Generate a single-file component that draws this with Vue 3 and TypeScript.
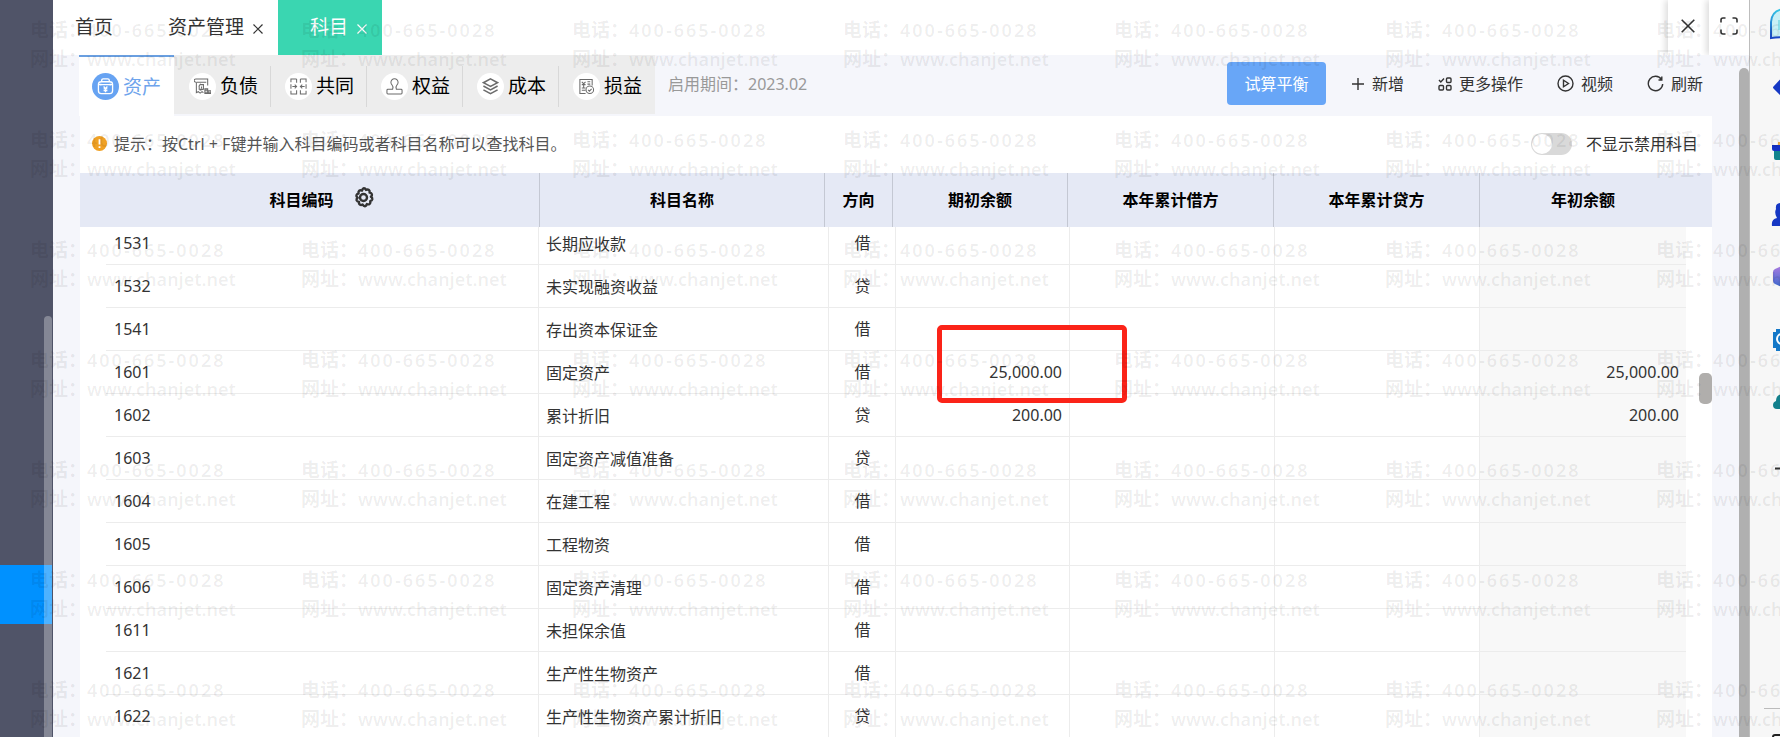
<script setup lang="ts">
import { ref } from 'vue'

interface Account {
  code: string
  name: string
  dir: '借' | '贷'
  opening?: string
  debit?: string
  credit?: string
  yearStart?: string
}

const categories = ['资产', '负债', '共同', '权益', '成本', '损益']
const activeCategory = ref(0)
const hideDisabled = ref(false)

const accounts: Account[] = [
  { code: '1531', name: '长期应收款', dir: '借' },
  { code: '1532', name: '未实现融资收益', dir: '贷' },
  { code: '1541', name: '存出资本保证金', dir: '借' },
  { code: '1601', name: '固定资产', dir: '借', opening: '25,000.00', yearStart: '25,000.00' },
  { code: '1602', name: '累计折旧', dir: '贷', opening: '200.00', yearStart: '200.00' },
  { code: '1603', name: '固定资产减值准备', dir: '贷' },
  { code: '1604', name: '在建工程', dir: '借' },
  { code: '1605', name: '工程物资', dir: '借' },
  { code: '1606', name: '固定资产清理', dir: '借' },
  { code: '1611', name: '未担保余值', dir: '借' },
  { code: '1621', name: '生产性生物资产', dir: '借' },
  { code: '1622', name: '生产性生物资产累计折旧', dir: '贷' },
]
</script>

<template>
  <div class="page">
    <aside class="sidebar">
      <div class="side-active"></div>
      <div class="side-thumb"></div>
    </aside>

    <div class="workspace">
      <header class="topbar">
        <nav class="pages">
          <button class="page-tab home">首页</button>
          <button class="page-tab assets">资产管理
            <svg class="x" viewBox="0 0 10 10"><path d="M.5.5l9 9M9.5.5l-9 9" /></svg>
          </button>
          <button class="page-tab current">科目
            <svg class="x" viewBox="0 0 10 10"><path d="M.5.5l9 9M9.5.5l-9 9" /></svg>
          </button>
        </nav>
        <button class="win-btn close" aria-label="关闭">
          <svg width="14" height="14" viewBox="0 0 14 14"><path d="M.7.7l12.6 12.6M13.3.7L.7 13.3" /></svg>
        </button>
        <button class="win-btn full" aria-label="全屏">
          <svg width="18" height="18" viewBox="0 0 18 18"><path d="M1 5.500V3q0-2 2-2h2.500M12.500 1H15q2 0 2 2v2.500M17 12.500V15q0 2-2 2h-2.500M5.500 17H3q-2 0-2-2v-2.500" /></svg>
        </button>
      </header>

      <div class="content">
        <main class="main">
          <div class="toolbar">
            <div class="categories" role="tablist">
              <button
                v-for="(c, i) in categories"
                :key="c"
                role="tab"
                :aria-selected="i === activeCategory"
                :class="['category', { active: i === activeCategory }]"
                @click="activeCategory = i"
              >
                <span class="disc">
                  <svg v-if="i === 0" viewBox="0 0 18 18">
                    <rect x="1.500" y="4" width="15" height="12.500" rx="3" />
                    <path d="M5 4V2.500Q5 1 6.500 1h5Q13 1 13 2.500V4M1.500 7h15M4 6v2M14 6v2" />
                    <path d="M7 9l2 2.200L11 9M9 11v4M7 11.500h4M7 13.300h4" />
                  </svg>
                  <svg v-else-if="i === 1" viewBox="0 0 18 18">
                    <path d="M2.500 4.500C-.5 4.500-.5 1 2 1h12.500v7M2.500 4.500V15.500l2-1 2 1.500 2-1.500 1.500 1M3 4.500h10M7 6L5 9M6 7h4v5H5.500V8.500M8 9v2M6 13l4-1" />
                    <path d="M11.500 11.500h3v5h-3zM15 13.500h3v3h-3zM12 13h2M12 15h2M15.500 15h2" />
                  </svg>
                  <svg v-else-if="i === 2" viewBox="0 0 18 18">
                    <path d="M7 1H1v3.500M1 6.500v5M1 13.500V17h6V13M7 1v4M11 1h6v3.500M17 6.500v5M17 13.500V17h-6V13M11 1v4M2.500 9H7M5 7l2 2-2 2M15.500 9H11M13 7l-2 2 2 2" />
                  </svg>
                  <svg v-else-if="i === 3" viewBox="0 0 18 18">
                    <path d="M7 12q1-3-.5-4.500a3.800 3.800 0 1 1 5 0Q10 9 11 12h5q1 0 1 1v3q0 1-1 1H2q-1 0-1-1v-3q0-1 1-1z" />
                  </svg>
                  <svg v-else-if="i === 4" class="bold" viewBox="0 0 18 18">
                    <path d="M9 1l7.500 4L9 9 1.500 5zM1.500 8.500L9 12.500l7.500-4M1.500 12.500L9 16.500l7.500-4" />
                  </svg>
                  <svg v-else viewBox="0 0 18 18">
                    <path d="M8 16.500H2V1.500h13V8M4 4l2 2 2-2M6 6v4M4 7h4M10 4h3M10 6.500h3M4 10.500h4M4 13h4" />
                    <circle cx="12.500" cy="12.500" r="4" /><path d="M10.700 12.500l1.400 1.500 2.300-2.500" />
                  </svg>
                </span>
                {{ c }}
              </button>
            </div>
            <span class="period">启用期间：2023.02</span>
            <div class="actions">
              <button class="primary">试算平衡</button>
              <button class="action">
                <svg width="14" height="14" viewBox="0 0 14 14"><path d="M7 1v12M1 7h12" /></svg>新增
              </button>
              <button class="action more">
                <svg width="14" height="14" viewBox="0 0 14 14">
                  <path d="M1 3l1.800 2L6 1.500" /><rect x="8.500" y="1" width="4.500" height="4.500" rx="1" />
                  <rect x="1" y="8.500" width="4.500" height="4.500" rx="1" /><rect x="8.500" y="8.500" width="4.500" height="4.500" rx="1" />
                </svg>更多操作
              </button>
              <button class="action video">
                <svg width="17" height="17" viewBox="0 0 17 17"><circle cx="8.500" cy="8.500" r="7.500" /><path d="M6.500 5.200v6.600l5-3.300z" /></svg>视频
              </button>
              <button class="action reload">
                <svg width="17" height="17" viewBox="0 0 17 17"><path d="M14.500 4.500A7.200 7.200 0 1 0 15.700 9M11.500 5h3.300V1.500" /></svg>刷新
              </button>
            </div>
          </div>

          <section class="panel">
            <div class="hint">
              <svg width="15" height="15" viewBox="0 0 15 15"><circle cx="7.500" cy="7.500" r="7.500" fill="#f0a125" /><path d="M7.500 3.300v5.200M7.500 10.200v1.700" stroke="#fff" stroke-width="1.800" /></svg>
              <span>提示：按Ctrl + F键并输入科目编码或者科目名称可以查找科目。</span>
              <label class="switch">
                <input v-model="hideDisabled" type="checkbox" role="switch" />
                不显示禁用科目
              </label>
            </div>

            <div class="thead">
              <table>
                <colgroup>
                  <col /><col class="h-name" /><col class="h-dir" /><col class="h-open" /><col class="h-sum" /><col class="h-sum" /><col class="year" />
                </colgroup>
                <thead>
                  <tr>
                    <th>
                      <span class="code-head">科目编码
                        <button class="gear" aria-label="列设置">
                          <svg width="24" height="24" viewBox="0 0 24 24">
                            <path d="M12 2.200q1.200 0 1.900 1.700 1.700-.9 3 .1 1 .8.700 2.600 1.900.2 2.300 1.700.4 1.400-1 2.500 1.600 1 1.400 2.400-.3 1.500-2.100 1.900.6 1.700-.5 2.700-1.200 1-2.800.3-.5 1.800-2 2.100-1.400 0-2.300-1.700-1.500 1-2.800.1-1.200-1-.7-2.600-1.900-.2-2.500-1.600-.4-1.500 1.100-2.600-1.600-1.100-1.300-2.500.4-1.500 2.200-1.800-.5-1.800.6-2.700 1.200-1 2.800-.2.600-2 2-2.400z" />
                            <circle cx="11.500" cy="11.500" r="3.500" />
                          </svg>
                        </button>
                      </span>
                    </th>
                    <th>科目名称</th><th>方向</th><th>期初余额</th><th>本年累计借方</th><th>本年累计贷方</th><th>年初余额</th>
                  </tr>
                </thead>
              </table>
            </div>

            <div class="tbody">
              <table aria-label="科目">
                <colgroup>
                  <col /><col class="b-name" /><col class="b-dir" /><col class="b-open" /><col class="b-debit" /><col class="b-credit" /><col class="year" />
                </colgroup>
                <tbody>
                  <tr v-for="a in accounts" :key="a.code">
                    <td>{{ a.code }}</td>
                    <td class="name">{{ a.name }}</td>
                    <td class="dir">{{ a.dir }}</td>
                    <td class="num">{{ a.opening }}</td>
                    <td class="num">{{ a.debit }}</td>
                    <td class="num">{{ a.credit }}</td>
                    <td class="num shade">{{ a.yearStart }}</td>
                  </tr>
                </tbody>
              </table>
              <div class="table-thumb"></div>
              <div class="highlight"></div>
            </div>
          </section>
        </main>
        <div class="scrollbar"></div>
      </div>
    </div>

    <aside class="rail">
      <button aria-label="消息">
        <svg viewBox="0 0 32 32">
          <defs><linearGradient id="chat" x2="0" y2="1"><stop stop-color="#35c8e5" /><stop offset="1" stop-color="#1745c4" /></linearGradient></defs>
          <path d="M1 30V14Q2 1 16 1t15 14-15 14Q8 29 1 30z" fill="#c9f0f6" stroke="url(#chat)" stroke-width="2" /><path d="M8 12h16v10H8z" fill="#8edfe8" />
        </svg>
      </button>
      <button aria-label="应用"><svg viewBox="0 0 32 32"><path d="M3.500 15.500q-1 1 0 2L14 28l12-12L14 4z" fill="#1638c4" /></svg></button>
      <button aria-label="礼品"><svg viewBox="0 0 32 32"><path d="M4 14h24v12H6q-2 0-2-2z" fill="#12838e" /><path d="M2 11h28v6H4q-2 0-2-2z" fill="#1432c6" /><path d="M8 8h10v3H8z" fill="#f0b34a" /></svg></button>
      <button aria-label="客服"><svg viewBox="0 0 32 32"><path d="M2 29q-1-7 5-8-3-5-1-9-1-6 5-6h9v23z" fill="#1638c4" /></svg></button>
      <button aria-label="产品">
        <svg viewBox="0 0 32 32"><defs><linearGradient id="cube" x2="0" y2="1"><stop stop-color="#ae7be0" /><stop offset="1" stop-color="#3868cc" /></linearGradient></defs><path d="M3 12q0-2 2-3l9-4 12 6v10l-12 7-9-4q-2-1-2-3z" fill="url(#cube)" /></svg>
      </button>
      <button aria-label="助手"><svg viewBox="0 0 32 32"><path d="M6 6h18v22H6v-3H3V9h3z" fill="#1478c8" /><circle cx="12" cy="16" r="5" fill="#1478c8" stroke="#fff" stroke-width="2" /></svg></button>
      <button aria-label="云"><svg viewBox="0 0 32 32"><path d="M7 23q-4 0-4-4 0-3 3-4 0-7 8-7 7 0 8 7v8z" fill="#13808c" /></svg></button>
      <button aria-label="收起"><svg viewBox="0 0 32 32"><path d="M5 19.500h20" stroke="#333" stroke-width="2" /></svg></button>
      <div class="rail-foot"><svg width="20" height="28" viewBox="0 0 20 28"><rect x="1" y="26" width="18" height="12" rx="2" fill="none" stroke="#222" stroke-width="2" /></svg></div>
    </aside>

    <div class="watermark" aria-hidden="true">
      <div v-for="n in 49" :key="n" class="mark">
        <div>电话：<span class="value phone">400-665-0028</span></div>
        <div>网址：<span class="value">www.chanjet.net</span></div>
      </div>
    </div>
  </div>
</template>

<style>
body {
  margin: 0;
}
</style>

<style scoped>
.page {
  position: relative;
  display: flex;
  height: 100vh;
  overflow: hidden;
  font: 16px/24px "Noto Sans", "Noto Sans CJK SC", sans-serif;
  color: #333;
  background: #f5f6fb;
}
.page * {
  box-sizing: border-box;
}
button {
  border: 0;
  padding: 0;
  background: none;
  font: inherit;
  color: inherit;
  cursor: pointer;
  white-space: nowrap;
}
svg {
  display: block;
  flex: none;
  fill: none;
}

.sidebar {
  position: relative;
  flex: none;
  width: 53px;
  background: #505468;
}
.side-active {
  margin-top: 565px;
  height: 59px;
  width: 52px;
  background: #0091ff;
}
.side-thumb {
  position: absolute;
  top: 316px;
  bottom: 0;
  right: 1px;
  width: 8px;
  border-radius: 4px 4px 0 0;
  background: rgba(255, 255, 255, 0.3);
}

.workspace {
  flex: 1;
  min-width: 0;
  display: flex;
  flex-direction: column;
}
.topbar {
  flex: none;
  display: flex;
  height: 55px;
  background: #fff;
}
.pages {
  display: flex;
  flex: 1;
}
.page-tab {
  display: flex;
  align-items: center;
  gap: 9px;
  font-size: 19px;
  padding-bottom: 2px;
}
.home {
  padding-left: 22px;
  padding-right: 28px;
}
.assets {
  padding-left: 27px;
  padding-right: 15px;
}
.current {
  padding-left: 32px;
  padding-right: 15px;
  background: #3ad6b1;
  color: #fff;
}
.x {
  width: 10px;
  height: 10px;
  margin-top: 4px;
  stroke: currentColor;
  stroke-width: 1.2;
}
.win-btn {
  display: flex;
  align-items: center;
  justify-content: center;
  padding-bottom: 4px;
  box-shadow: -3px 0 6px rgba(0, 0, 0, 0.13);
  background: #fff;
  clip-path: inset(0 0 0 -8px);
}
.win-btn svg {
  stroke: #333;
  stroke-width: 1.6;
}
.close {
  width: 41px;
  padding-right: 1px;
}
.full {
  width: 40px;
}

.content {
  flex: 1;
  min-height: 0;
  display: flex;
}
.main {
  flex: 1;
  min-width: 0;
  display: flex;
  flex-direction: column;
  padding: 0 27px 0 26px;
}
.toolbar {
  flex: none;
  display: flex;
  height: 61px;
}
.categories {
  display: flex;
  height: 59px;
  padding-right: 1px;
  background: #ededed;
}
.category {
  position: relative;
  display: flex;
  align-items: center;
  gap: 4px;
  width: 96px;
  padding: 3px 0 0 15px;
  font-size: 19px;
  color: #000;
}
.category:not(.active):not(:last-child)::after {
  content: "";
  position: absolute;
  right: -1px;
  top: 11px;
  width: 1px;
  height: 41px;
  background: #d8d8d8;
}
.category.active {
  height: 61px;
  width: 95px;
  padding: 0 0 0 13px;
  border-top: 2px solid #6a9fe0;
  background: #fff;
  color: #6ea4ec;
}
.disc {
  display: grid;
  place-items: center;
  width: 27px;
  height: 27px;
  border-radius: 50%;
  background: #fff;
}
.disc svg {
  width: 17px;
  height: 17px;
  stroke: #6b6b6b;
  stroke-width: 1.100;
}
.disc svg.bold {
  stroke-width: 1.600;
}
.active .disc {
  background: #67a3f2;
}
.active .disc svg {
  stroke: #fff;
  stroke-width: 1.400;
}
.period {
  margin: 17px 0 0 13px;
  color: #999;
  white-space: nowrap;
}
.actions {
  display: flex;
  align-items: center;
  margin-left: auto;
  padding: 0 9px 4px 0;
}
.primary {
  width: 99px;
  height: 43px;
  border-radius: 4px;
  background: #68a6f7;
  color: #fff;
  margin-right: 25px;
}
.action {
  display: flex;
  align-items: center;
  gap: 7px;
}
.action svg {
  stroke: #333;
  stroke-width: 1.400;
}
.more,
.video,
.reload {
  margin-left: 34px;
}

.panel {
  flex: 1;
  min-height: 0;
  display: flex;
  flex-direction: column;
  margin-left: 1px;
  background: #fff;
}
.hint {
  flex: none;
  display: flex;
  align-items: center;
  gap: 7px;
  height: 57px;
  padding: 0 14px 2px 12px;
  color: #555;
}
.switch {
  display: flex;
  align-items: center;
  gap: 14px;
  margin-left: auto;
  color: #333;
}
.switch input {
  appearance: none;
  width: 41px;
  height: 22px;
  margin: 0;
  padding: 1px;
  border-radius: 11px;
  background: #d9d9d9;
}
.switch input::before {
  content: "";
  display: block;
  width: 20px;
  height: 20px;
  border-radius: 50%;
  background: #fff;
}
.switch input:checked {
  background: #68a6f7;
}
.switch input:checked::before {
  margin-left: auto;
}

table {
  width: 100%;
  table-layout: fixed;
  border-collapse: separate;
  border-spacing: 0;
}
.thead {
  flex: none;
  padding: 0 26px;
  background: #e5e9f5;
}
th {
  height: 54px;
  padding: 0;
  border-right: 1px solid #c4c8d3;
  color: #000;
  font-weight: bold;
}
th:last-child {
  border-right: 0;
}
.code-head {
  display: flex;
  align-items: center;
  justify-content: center;
  gap: 18px;
}
.gear {
  margin-bottom: 4px;
}
.gear svg {
  stroke: #333;
  stroke-width: 2.400;
  stroke-linejoin: round;
}
.h-name { width: 285px; }
.h-dir { width: 68px; }
.h-open { width: 175px; }
.h-sum { width: 206px; }
.year { width: 206px; }
.b-name { width: 290px; }
.b-dir { width: 67px; }
.b-open { width: 174px; }
.b-debit,
.b-credit { width: 205px; }

.tbody {
  position: relative;
  flex: 1;
  min-height: 0;
  overflow: hidden;
  padding: 0 26px;
}
.tbody table {
  margin-top: -5px;
}
td {
  height: 43px;
  padding: 0 7px 0 8px;
  border-right: 1px solid #ececec;
  border-bottom: 1px solid #ececec;
}
td:last-child {
  border-right: 0;
}
.name {
  padding-top: 2px;
  padding-left: 7px;
}
.dir {
  text-align: center;
}
.num {
  text-align: right;
}
.shade {
  background: #f8f8f8;
}
.table-thumb {
  position: absolute;
  right: 0;
  top: 146px;
  width: 13px;
  height: 31px;
  border-radius: 5px;
  background: #b0aeac;
}
.highlight {
  position: absolute;
  right: 585px;
  top: 98px;
  width: 190px;
  height: 78px;
  border: 5px solid #fb2318;
  border-radius: 5px;
}
.scrollbar {
  flex: none;
  width: 10px;
  margin-top: 13px;
  border-radius: 5px 5px 0 0;
  background: #b0b0b0;
}

.rail {
  flex: none;
  display: flex;
  flex-direction: column;
  gap: 31px;
  width: 31px;
  padding: 8px 0 0 20px;
  overflow: hidden;
  border-left: 1px solid #bdbdbd;
  background: #f7f7f7;
}
.rail button,
.rail button svg {
  width: 32px;
  height: 32px;
}
.rail-foot {
  margin-top: auto;
  margin-left: -6px;
  padding-left: 8px;
  border-top: 1px solid #bbb;
}

.watermark {
  position: absolute;
  inset: 0;
  display: grid;
  grid-template-columns: repeat(7, 271px);
  grid-auto-rows: 110px;
  padding: 16px 0 0 30px;
  overflow: hidden;
  pointer-events: none;
  color: rgba(0, 0, 0, 0.07);
  font-size: 19px;
  font-weight: 600;
  line-height: 29px;
  white-space: nowrap;
}
.value {
  font-size: 18px;
}
.phone {
  letter-spacing: 2px;
}
</style>
